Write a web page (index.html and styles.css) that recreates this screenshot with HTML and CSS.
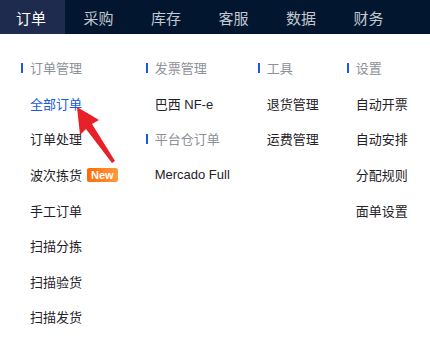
FILE: index.html
```html
<!DOCTYPE html>
<html lang="zh-CN">
<head>
<meta charset="utf-8">
<title>订单菜单</title>
<link rel="stylesheet" href="styles.css">
</head>
<body>
<nav class="topbar">
  <a class="tab active">订单</a>
  <a class="tab">采购</a>
  <a class="tab">库存</a>
  <a class="tab">客服</a>
  <a class="tab">数据</a>
  <a class="tab">财务</a>
</nav>
<div class="menu">
  <div class="col">
    <div class="head">订单管理</div>
    <div class="item current">全部订单</div>
    <div class="item">订单处理</div>
    <div class="item">波次拣货 <span class="badge">New</span></div>
    <div class="item">手工订单</div>
    <div class="item">扫描分拣</div>
    <div class="item">扫描验货</div>
    <div class="item">扫描发货</div>
  </div>
  <div class="col">
    <div class="head">发票管理</div>
    <div class="item">巴西 NF-e</div>
    <div class="head">平台仓订单</div>
    <div class="item">Mercado Full</div>
  </div>
  <div class="col">
    <div class="head">工具</div>
    <div class="item">退货管理</div>
    <div class="item">运费管理</div>
  </div>
  <div class="col">
    <div class="head">设置</div>
    <div class="item">自动开票</div>
    <div class="item">自动安排</div>
    <div class="item">分配规则</div>
    <div class="item">面单设置</div>
  </div>
</div>
<svg class="arrow" width="430" height="340" viewBox="0 0 430 340">
  <polygon points="77,107 99,120 92,124 115,161 112,163 86,129 80,135" fill="#e8202a"/>
</svg>
</body>
</html>
```
FILE: styles.css
```css
* { box-sizing: border-box; }
html, body { margin: 0; padding: 0; background: #fff; }
body {
  width: 430px;
  height: 340px;
  overflow: hidden;
  font-family: "Liberation Sans", "Noto Sans CJK SC", sans-serif;
  position: relative;
}
.topbar {
  display: flex;
  gap: 2.5px;
  height: 34px;
  background: #021630;
}
.tab {
  display: flex;
  align-items: center;
  padding: 0 19px 0 16px;
  width: 65px;
  font-size: 15px;
  color: #c3c7cf;
  white-space: nowrap;
}
.tab.active {
  background: #1f2b4e;
  color: #ffffff;
}
.menu {
  display: flex;
  gap: 28px;
  padding: 16px 0 0 21px;
}
.col {
  display: flex;
  flex-direction: column;
}
.head, .item {
  height: 35.6px;
  display: flex;
  align-items: center;
  font-size: 13px;
  white-space: nowrap;
}
.head {
  color: #8d9199;
}
.head::before {
  content: "";
  width: 2px;
  height: 10px;
  background: #1a56e8;
  margin-right: 7px;
}
.item {
  color: #1f2329;
  padding-left: 9px;
}
.item.current {
  color: #1a5ae0;
}
.badge {
  display: inline-block;
  margin-left: 5px;
  height: 14px;
  line-height: 14px;
  padding: 0 4px;
  border-radius: 2px;
  background: linear-gradient(90deg, #ff6a00, #ff9a40);
  color: #fff;
  font-size: 11px;
  font-weight: bold;
}
.arrow {
  position: absolute;
  left: 0;
  top: 0;
  pointer-events: none;
}
```
